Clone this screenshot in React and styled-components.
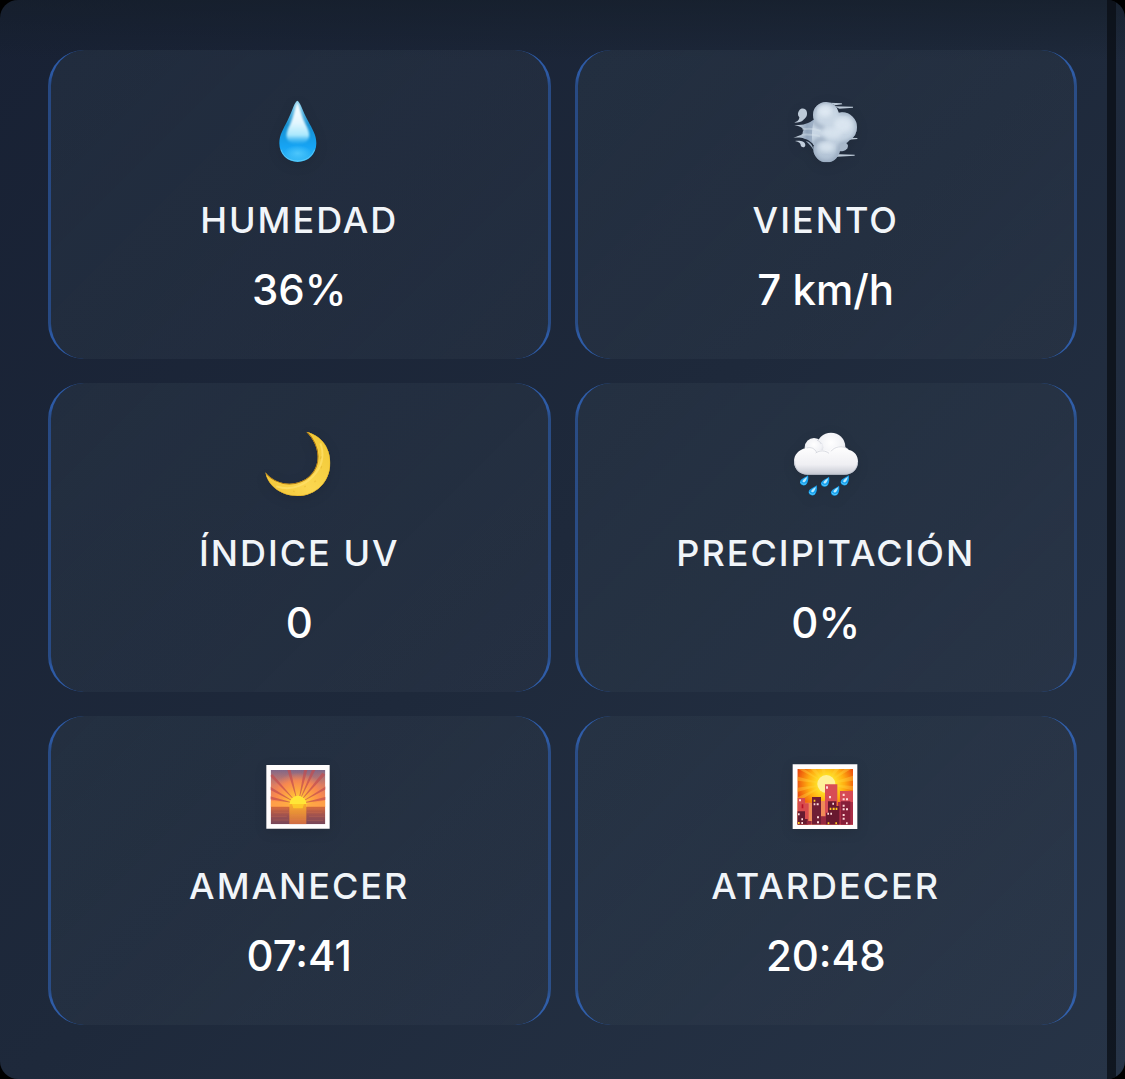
import React from "react";
import styled, { createGlobalStyle } from "styled-components";

const GlobalStyle = createGlobalStyle`
  *, *::before { box-sizing: border-box; }
  body { margin: 0; background: #000; font-family: Inter, "Liberation Sans", sans-serif; }
`;

const Panel = styled.main`
  display: flex;
  min-height: 100vh;
  border-radius: 18px;
  overflow: hidden;
  background:
    linear-gradient(180deg, rgba(20, 29, 40, 0.6), rgba(20, 29, 40, 0) 60px),
    linear-gradient(135deg, #182134 0%, #1e293b 50%, #273447 100%);
`;

const Grid = styled.section`
  flex: 1;
  display: grid;
  grid-template-columns: repeat(2, minmax(0, 1fr));
  align-content: start;
  gap: 24px;
  padding: 50px 30px 54px 48px;
`;

const Track = styled.div`
  width: 9px;
  margin-right: 9px;
  background: rgba(10, 13, 20, 0.75);
`;

const Card = styled.article`
  position: relative;
  display: flex;
  flex-direction: column;
  align-items: center;
  padding: 49px 24px 41px;
  border: solid rgba(59, 130, 246, 0.4);
  border-width: 0 3px;
  border-radius: 36px;
  background: linear-gradient(135deg, rgba(50, 65, 80, 0.34), rgba(56, 67, 84, 0.24));
  background-clip: padding-box;

  &::before {
    content: "";
    position: absolute;
    inset: 0 -3px;
    border: solid rgba(59, 130, 246, 0.3);
    border-width: 0 3px;
    border-radius: 36px;
    mask: linear-gradient(#000 24px, transparent 36px, transparent calc(100% - 36px), #000 calc(100% - 24px));
    pointer-events: none;
  }
`;

const Icon = styled.svg`
  display: block;
  width: 64px;
  height: 64px;
  overflow: visible;
  filter: drop-shadow(0 3px 6px rgba(0, 0, 0, 0.1));
`;

const Label = styled.h2`
  margin: 35px 0 20px;
  font-size: 36px;
  font-weight: 500;
  line-height: 44px;
  letter-spacing: 2px;
  text-transform: uppercase;
  color: #f1f5f9;
`;

const Value = styled.p`
  margin: 0;
  font-size: 42px;
  font-weight: 500;
  line-height: 56px;
  color: #fff;
`;

function Droplet() {
  return (
    <Icon viewBox="36 27 192 192" aria-hidden="true">
      <defs>
        <linearGradient id="dropBody" x1="0" y1="0" x2="0" y2="1">
          <stop offset="0" stopColor="#8fd4ef" />
          <stop offset=".4" stopColor="#168fd0" />
          <stop offset=".75" stopColor="#16a4f4" />
          <stop offset="1" stopColor="#34b8f5" />
        </linearGradient>
        <linearGradient id="dropShine" x1="0" y1="0" x2="0" y2="1">
          <stop offset="0" stopColor="#fff" />
          <stop offset=".5" stopColor="#e2f6fe" />
          <stop offset=".8" stopColor="#a9e8fd" />
          <stop offset="1" stopColor="#3db8f7" stopOpacity=".3" />
        </linearGradient>
        <radialGradient id="dropGlow" cx=".5" cy=".5" r=".5">
          <stop offset="0" stopColor="#4cc6fb" />
          <stop offset="1" stopColor="#4cc6fb" stopOpacity="0" />
        </radialGradient>
        <filter id="dropSoft"><feGaussianBlur stdDeviation="2.5" /></filter>
      </defs>
      <path d="M127 32C135 35 143 62 158 91C172 117 184 135 184 160C184 193 160 216 128 216C97 216 73 193 73 160C73 135 85 117 98 91C112 62 119 35 127 32Z" fill="url(#dropBody)" />
      <ellipse cx="128" cy="190" rx="42" ry="25" fill="url(#dropGlow)" />
      <path d="M127 37C134 48 139 77 151 101C159 116 165 130 162 142C158 157 145 161 128 161C111 161 98 157 95 142C93 130 98 116 106 101C117 77 121 48 127 37Z" fill="url(#dropShine)" filter="url(#dropSoft)" />
      <path d="M78 179C87 203 104 212 128 213C152 212 168 203 179 179" fill="none" stroke="#74d2f8" strokeWidth="3" opacity=".65" />
    </Icon>
  );
}

function Wind() {
  return (
    <Icon viewBox="42 27 192 192" aria-hidden="true">
      <defs>
        <linearGradient id="puff" x1="0" y1="0" x2="0" y2="1">
          <stop offset="0" stopColor="#cbd8e5" />
          <stop offset=".5" stopColor="#c9d7e5" />
          <stop offset="1" stopColor="#aebfd2" />
        </linearGradient>
        <linearGradient id="jet" x1="0" x2="1">
          <stop offset="0" stopColor="#dce6ef" />
          <stop offset=".35" stopColor="#91a4bb" />
          <stop offset="1" stopColor="#cbd9e7" />
        </linearGradient>
        <filter id="windSoft"><feGaussianBlur stdDeviation="6" /></filter>
        <clipPath id="windClip">
          <circle cx="186" cy="112" r="45" />
          <ellipse cx="180" cy="128" rx="37" ry="36" />
          <circle cx="138" cy="75" r="39" />
          <circle cx="140" cy="177" r="40" />
          <path d="M104 90H180V165H100C94 150 94 110 104 90Z" />
        </clipPath>
      </defs>
      <g fill="#bbc8d6">
        <path d="M150 38L185 40L187 43L165 46ZM164 49L219 50V53L178 56ZM202 143L232 144V147L197 150ZM157 192L224 194V197L159 201Z" />
        <path d="M170 160C181 154 203 155 204 167C204 180 188 186 176 183Z" fill="#a8b8ca" />
      </g>
      <path d="M58 61C63 52 80 54 81 68C82 81 75 84 70 90C65 96 56 97 43 98C58 92 57 87 58 82C52 76 53 68 58 61Z" fill="#bdcad8" />
      <path d="M45 153C59 151 76 153 76 165C76 174 64 174 62 166C63 160 57 156 45 153Z" fill="#c1cddb" />
      <path d="M43 105C64 106 84 103 104 86L157 95V167L122 176C100 166 88 147 73 146C61 141 50 143 40 143C53 139 61 136 68 132C67 127 69 123 71 119C66 112 56 108 43 105Z" fill="url(#jet)" />
      <path d="M77 153C91 155 98 166 101 181C94 168 87 162 77 153Z" fill="#9eafc3" />
      <g clipPath="url(#windClip)">
        <path d="M90 30H240V220H90Z" fill="url(#puff)" />
        <g fill="none" stroke="#8093aa" strokeWidth="7" filter="url(#windSoft)">
          <path d="M170 52C163 36 151 34 138 34C115 34 98 52 98 75C98 99 114 113 132 112" />
          <path d="M176 68C213 61 233 82 233 112C233 139 216 158 181 164C179 199 163 218 140 218C115 218 99 199 99 177C99 156 117 142 137 148" />
        </g>
        <ellipse cx="135" cy="64" rx="20" ry="17" fill="#e2ecf5" filter="url(#windSoft)" opacity=".8" />
        <ellipse cx="188" cy="105" rx="26" ry="22" fill="#dfe9f3" filter="url(#windSoft)" opacity=".8" />
        <ellipse cx="140" cy="172" rx="23" ry="15" fill="#dce7f1" filter="url(#windSoft)" opacity=".8" />
        <ellipse cx="157" cy="130" rx="30" ry="17" fill="#dce7f1" filter="url(#windSoft)" opacity=".7" />
      </g>
      <path d="M67 118C86 114 104 116 122 123M65 134C84 133 102 133 120 139" fill="none" stroke="#dae5ee" strokeWidth="6" opacity=".4" />
    </Icon>
  );
}

function Moon() {
  return (
    <Icon viewBox="36 30 192 192" aria-hidden="true">
      <defs>
        <linearGradient id="moonFill" x1="0" y1="1" x2="1" y2="0">
          <stop offset="0" stopColor="#f0c030" />
          <stop offset=".4" stopColor="#fbd750" />
          <stop offset="1" stopColor="#efc52f" />
        </linearGradient>
        <filter id="moonSoft"><feGaussianBlur stdDeviation="2" /></filter>
        <clipPath id="moonClip"><path d="M154 29C199 40 226 77 226 122C226 179 183 222 127 222C79 222 38 192 31 151C52 176 77 185 103 185C151 185 189 151 188 103C187 74 175 51 154 29Z" /></clipPath>
      </defs>
      <g clipPath="url(#moonClip)">
        <path d="M20 20H240V230H20Z" fill="url(#moonFill)" />
        <path d="M31 151C52 176 77 185 103 185C151 185 189 151 188 103C187 74 175 51 154 29" fill="none" stroke="#a86f0c" strokeWidth="5" filter="url(#moonSoft)" />
        <path d="M64 193C112 209 157 188 185 150C204 123 207 90 196 64" fill="none" stroke="#ffe16d" strokeWidth="6" filter="url(#moonSoft)" opacity=".7" />
        <path d="M31 151C38 192 79 222 127 222C183 222 226 179 226 122C226 77 199 40 154 29" fill="none" stroke="#dfaa22" strokeWidth="3" filter="url(#moonSoft)" />
        <path d="M114 207l5 2M148 195l4-3M178 180l5-4M198 139l2-7M196 111l3-8" stroke="#dba927" strokeWidth="4" opacity=".35" />
      </g>
    </Icon>
  );
}

function RainDrop({ x, y }) {
  return (
    <g transform={`translate(${x} ${y})`}>
      <path d="M25 0C27 8 26 23 19 28C12 33 1 29 1 21C1 11 15 8 25 0Z" fill="#18a1ee" />
      <path d="M23 4C20 13 17 23 10 20C5 16 16 9 23 4Z" fill="#b9eaff" />
      <path d="M3 21C8 27 14 29 20 24" fill="none" stroke="#5ed1ff" strokeWidth="3" />
    </g>
  );
}

function Rain() {
  return (
    <Icon viewBox="42 30 192 192" aria-hidden="true">
      <defs>
        <radialGradient id="cloudPuff" cx=".5" cy=".35" r=".65">
          <stop offset="0" stopColor="#fff" />
          <stop offset=".65" stopColor="#f0f1f5" />
          <stop offset="1" stopColor="#cfd1da" />
        </radialGradient>
        <linearGradient id="cloudBase" x1="0" y1="0" x2="0" y2="1">
          <stop offset="0" stopColor="#fff" />
          <stop offset=".65" stopColor="#efeff3" />
          <stop offset="1" stopColor="#c5c8d2" />
        </linearGradient>
      </defs>
      <circle cx="153" cy="75" r="43" fill="url(#cloudPuff)" />
      <circle cx="102" cy="76" r="28" fill="url(#cloudPuff)" />
      <path d="M78 78C90 70 105 78 110 88C121 82 139 83 148 88C159 70 191 66 207 84C224 87 234 102 234 119C234 142 216 158 193 158H83C60 158 42 142 42 119C42 98 55 84 78 78Z" fill="url(#cloudBase)" />
      <path d="M107 93C120 84 136 85 147 94M153 88C163 74 187 69 203 81M80 78C94 74 104 80 110 91M111 55C116 55 120 60 124 66" fill="none" stroke="#b7bbc8" strokeWidth="3" opacity=".5" />
      <path d="M44 116C42 139 60 157 83 157H193C216 157 233 142 233 119" fill="none" stroke="#b9becb" strokeWidth="3" opacity=".65" />
      <RainDrop x={59} y={160} />
      <RainDrop x={122} y={164} />
      <RainDrop x={181} y={160} />
      <RainDrop x={85} y={190} />
      <RainDrop x={152} y={191} />
    </Icon>
  );
}

function Sunrise() {
  return (
    <Icon viewBox="36 30 192 192" aria-hidden="true">
      <defs>
        <linearGradient id="dawnSky" x1="0" y1="0" x2="0" y2="1">
          <stop offset="0" stopColor="#75658c" />
          <stop offset=".4" stopColor="#d97c62" />
          <stop offset="1" stopColor="#ff9440" />
        </linearGradient>
        <radialGradient id="dawnGlow" gradientUnits="userSpaceOnUse" cx="129" cy="147" r="94">
          <stop offset="0" stopColor="#ffe33e" />
          <stop offset=".35" stopColor="#ffb53b" />
          <stop offset=".75" stopColor="#ff8a4b" stopOpacity=".8" />
          <stop offset="1" stopColor="#ef7f60" stopOpacity=".1" />
        </radialGradient>
        <linearGradient id="dawnSea" x1="0" y1="0" x2="0" y2="1">
          <stop offset="0" stopColor="#d56a3b" />
          <stop offset=".5" stopColor="#9d5150" />
          <stop offset="1" stopColor="#754559" />
        </linearGradient>
        <linearGradient id="dawnBeam" x1="0" y1="0" x2="0" y2="1">
          <stop offset="0" stopColor="#f9ad2b" />
          <stop offset="1" stopColor="#cf6a44" />
        </linearGradient>
        <clipPath id="dawnClip"><path d="M47 45H211V208H47Z" /></clipPath>
      </defs>
      <path d="M34 30H224V221H34Z" fill="#fffdfd" />
      <g clipPath="url(#dawnClip)">
        <path d="M47 45H211V156H47Z" fill="url(#dawnSky)" />
        <path d="M47 45H211V156H47Z" fill="url(#dawnGlow)" />
        <path d="M129 147L45 124V133ZM129 147L44 94V104ZM129 147L44 62L53 58ZM129 147L97 45H107ZM129 147L147 45H157ZM129 147L171 45H181ZM129 147L202 53L211 59ZM129 147L214 93V102ZM129 147L214 125V134Z" fill="#c24d4f" opacity=".7" />
        <path d="M47 139C61 136 71 143 87 141L106 147V156H47ZM211 137C193 137 180 145 154 147V156H211Z" fill="#ffa648" opacity=".75" />
        <path d="M104 147C104 133 115 122 129 122C143 122 154 133 154 147V158H104Z" fill="#ffe637" />
        <path d="M47 155H211V208H47Z" fill="url(#dawnSea)" />
        <path d="M103 147H154V208H103Z" fill="url(#dawnBeam)" />
        <path d="M111 147H147L143 160H115Z" fill="#ffd42a" opacity=".75" />
        <path d="M48 162H100M157 162H210M56 173H102M156 173H202M48 184H95M162 184H209M55 195H101M157 196H204M105 168H152M107 181H150M105 194H153" stroke="#ee8859" strokeWidth="2" opacity=".3" />
      </g>
    </Icon>
  );
}

function Sunset() {
  return (
    <Icon viewBox="42 30 192 192" aria-hidden="true">
      <defs>
        <radialGradient id="duskSky" gradientUnits="userSpaceOnUse" cx="139" cy="87" r="110">
          <stop offset="0" stopColor="#fff7a5" />
          <stop offset=".25" stopColor="#ffdf25" />
          <stop offset=".5" stopColor="#ffac10" />
          <stop offset=".8" stopColor="#ee540c" />
          <stop offset="1" stopColor="#d42c10" />
        </radialGradient>
        <clipPath id="duskClip"><path d="M52 42H219V209H52Z" /></clipPath>
      </defs>
      <path d="M38 28H232V222H38Z" fill="#fffdfd" />
      <g clipPath="url(#duskClip)">
        <path d="M52 42H219V209H52Z" fill="url(#duskSky)" />
        <path d="M139 87L49 64V77ZM139 87L48 99V112ZM139 87L55 42H73ZM139 87L92 42H107ZM139 87L124 42H136ZM139 87L164 42H178ZM139 87L194 42H213ZM139 87L221 62V77ZM139 87L221 93V107ZM139 87L47 129V145Z" fill="#ffd43b" opacity=".4" />
        <circle cx="139" cy="87" r="27" fill="#fff19a" />
        <path d="M52 143H104V209H52ZM119 138H149V209H119Z" fill="#f08b58" />
        <path d="M53 129H75V145H86V209H53Z" fill="#d84b4d" />
        <path d="M135 88H172V209H135Z" fill="#d84d55" />
        <path d="M180 108H219V209H180Z" fill="#d64a55" />
        <path d="M174 141H219V209H174Z" fill="#a92d46" />
        <path d="M52 169H75V192H83V209H52Z" fill="#651b31" />
        <path d="M96 126H123V209H96Z" fill="#701d35" />
        <path d="M144 139H169V153H178V209H138V173H144Z" fill="#68182f" />
        <path d="M183 139H211V209H183Z" fill="#861f3a" />
        <path d="M80 198H95V209H80ZM123 184H138V209H123Z" fill="#972940" />
        <g fill="#ffdada">
          <path d="M57 133h6v6h-6zM138 94h6v7h-6zM147 123h6v7h-6zM188 116h6v7h-6zM188 130h6v6h-6zM198 130h6v6h-6zM110 145h6v6h-6zM101 145h5v6h-5zM111 184h6v6h-6zM111 199h6v6h-6zM157 143h5v6h-5zM142 173h5v6h-5zM151 173h5v6h-5zM188 149h6v6h-6zM188 160h6v6h-6zM198 160h6v6h-6zM188 177h6v6h-6zM188 188h6v6h-6zM54 175h5v6h-5zM64 190h5v6h-5zM64 201h5v6h-5zM198 202h5v6h-5z" />
        </g>
        <path d="M101 134h5v6h-5zM149 158h5v7h-5zM158 158h6v7h-6zM167 158h5v7h-5zM143 202h5v6h-5zM166 202h5v6h-5zM54 201h5v6h-5z" fill="#ffca22" />
        <path d="M65 148h5v12h-5z" fill="#b91428" />
      </g>
    </Icon>
  );
}

const METRICS = [
  { label: "Humedad", value: "36%", Picture: Droplet },
  { label: "Viento", value: "7 km/h", Picture: Wind },
  { label: "Índice UV", value: "0", Picture: Moon },
  { label: "Precipitación", value: "0%", Picture: Rain },
  { label: "Amanecer", value: "07:41", Picture: Sunrise },
  { label: "Atardecer", value: "20:48", Picture: Sunset },
];

export default function App() {
  return (
    <>
      <GlobalStyle />
      <Panel>
        <Grid>
          {METRICS.map(({ label, value, Picture }) => (
            <Card key={label}>
              <Picture />
              <Label>{label}</Label>
              <Value>{value}</Value>
            </Card>
          ))}
        </Grid>
        <Track />
      </Panel>
    </>
  );
}
